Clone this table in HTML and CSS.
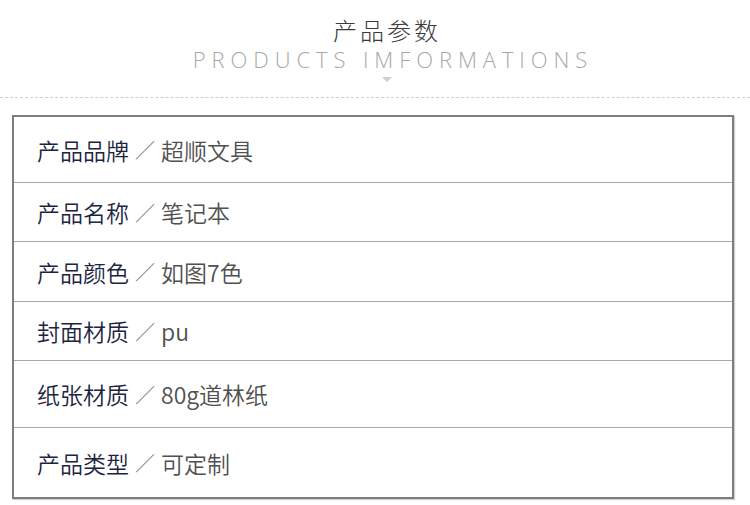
FILE: index.html
```html
<!DOCTYPE html>
<html lang="zh-CN">
<head>
<meta charset="utf-8">
<title>产品参数</title>
<link rel="stylesheet" href="styles.css">
</head>
<body>
<header class="head">
  <h1 class="title">产品参数</h1>
  <p class="subtitle">PRODUCTS IMFORMATIONS</p>
  <span class="arrow"></span>
</header>
<div class="dash"></div>
<section class="table">
  <div class="row h65"><span class="label">产品品牌</span><span class="sep">／</span><span class="value">超顺文具</span></div>
  <div class="row h58"><span class="label">产品名称</span><span class="sep">／</span><span class="value">笔记本</span></div>
  <div class="row h59"><span class="label">产品颜色</span><span class="sep">／</span><span class="value">如图7色</span></div>
  <div class="row h58"><span class="label">封面材质</span><span class="sep">／</span><span class="value">pu</span></div>
  <div class="row h66"><span class="label">纸张材质</span><span class="sep">／</span><span class="value">80g道林纸</span></div>
  <div class="row h69 last"><span class="label">产品类型</span><span class="sep">／</span><span class="value">可定制</span></div>
</section>
</body>
</html>
```
FILE: styles.css
```css
html, body {
  margin: 0;
  padding: 0;
  background: #fff;
}
body {
  width: 750px;
  height: 505px;
  overflow: hidden;
  font-family: "Noto Sans CJK SC", "Noto Sans", sans-serif;
}
.head {
  display: flex;
  flex-direction: column;
  align-items: center;
  padding-top: 17px;
  padding-left: 24px;
}
.title {
  margin: 0 0 4px;
  font-size: 24px;
  font-weight: 300;
  line-height: 26px;
  letter-spacing: 3px;
  color: #3a3a3a;
}
.subtitle {
  margin: 0 0 0 12px;
  font-family: "Open Sans", "Liberation Sans", sans-serif;
  font-weight: 300;
  font-size: 22px;
  line-height: 24px;
  letter-spacing: 5.9px;
  color: #a8a8a8;
}
.arrow {
  margin-top: 6px;
  width: 0;
  height: 0;
  border-left: 5px solid transparent;
  border-right: 5px solid transparent;
  border-top: 5px solid #cfcfcf;
}
.dash {
  margin-top: 15px;
  height: 0;
  border-top: 1px dashed #cfcfcf;
}
.table {
  margin: 17px 0 0 12px;
  width: 718px;
  border: 2px solid #7d7d7d;
  box-shadow: 1px 1px 1px #cfcfcf;
}
.row {
  display: flex;
  align-items: center;
  padding-left: 23px;
  border-bottom: 1px solid #a9a9a9;
  font-size: 23px;
  font-weight: 350;
  box-sizing: border-box;
}
.row.last { border-bottom: none; }
.h65 { height: 66px; }
.h58 { height: 59px; }
.h59 { height: 60px; }
.h66 { height: 67px; }
.h69 { height: 69px; }
.label {
  color: #1c2540;
}
.sep {
  color: #6a6a6a;
  font-size: 20px;
  font-weight: 300;
  margin: 0 6px 0 6px;
}
.value {
  color: #505050;
}
```
